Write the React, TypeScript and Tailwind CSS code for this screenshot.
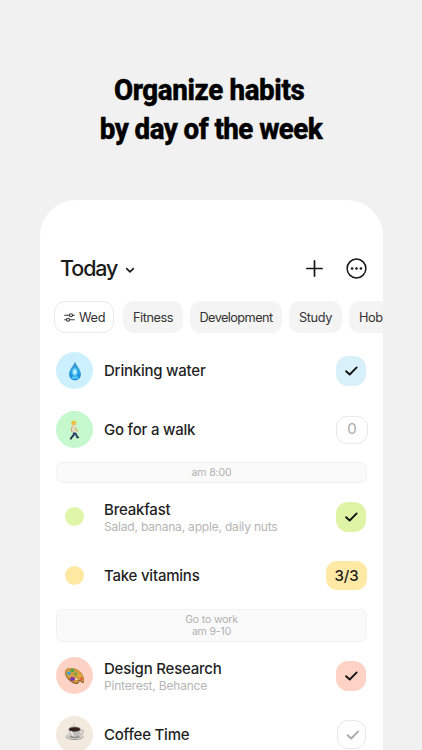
import type { ReactNode } from "react";
import clsx from "clsx";

type THabit = {
  title: string;
  note?: string;
  icon: ReactNode;
  action: ReactNode;
};

const Check = ({ className = "" }: { className?: string }) => (
  <svg
    width="14"
    height="12"
    viewBox="0 0 14 12"
    fill="none"
    stroke="currentColor"
    strokeWidth="1.9"
    strokeLinecap="round"
    strokeLinejoin="round"
    className={className}
  >
    <path d="M1.6 6.2 L5.2 9.5 L12.2 2.4" />
  </svg>
);

const Drop = () => (
  <svg width="14" height="20" viewBox="0 0 14 20">
    <defs>
      <linearGradient id="drop" x1="0" y1="0" x2="0" y2="1">
        <stop offset="0" stopColor="#3c8fc4" />
        <stop offset="0.5" stopColor="#2ba3e4" />
        <stop offset="1" stopColor="#1583d6" />
      </linearGradient>
      <radialGradient id="dropGlow">
        <stop offset="0" stopColor="#e2fbff" />
        <stop offset="0.5" stopColor="#86ddfb" />
        <stop offset="1" stopColor="#2ba3e4" stopOpacity="0" />
      </radialGradient>
    </defs>
    <path
      d="M7 .6C6.3 3.9 1.1 8.6 1.1 13.2C1.1 16.8 3.7 19.2 7 19.2S12.9 16.8 12.9 13.2C12.9 8.6 7.7 3.9 7 .6Z"
      fill="url(#drop)"
    />
    <ellipse cx="6.8" cy="11" rx="3.7" ry="5.6" fill="url(#dropGlow)" />
    <ellipse cx="7" cy="16.6" rx="3.5" ry="1.5" fill="#4fc5f5" />
  </svg>
);

const Walker = () => (
  <svg width="11" height="20" viewBox="0 0 11 20" fill="none">
    <path
      d="M5.2 12 L4.6 15.2 L2 18.2"
      stroke="#2c3560"
      strokeWidth="2"
      strokeLinejoin="round"
    />
    <path
      d="M5.5 12 L7.2 14.8 L8.6 17.8"
      stroke="#36406f"
      strokeWidth="2"
      strokeLinejoin="round"
    />
    <path d="M.9 18.6 L2.9 18.9 M8.2 18 L10 17" stroke="#222" strokeWidth="1.2" />
    <path d="M3.1 6 Q5.4 5 6.6 6.6 L7 12.4 H3.3Z" fill="#e6ddc8" />
    <path d="M3.2 6.5 L2.3 10.2 L3.4 12.2" stroke="#c9a468" strokeWidth="1.1" />
    <path d="M6.4 7.4 L7.1 10.2 L9.2 11.2" stroke="#d5a95c" strokeWidth="1.1" />
    <circle cx="4.9" cy="3.5" r="2.2" fill="#f0bf78" />
    <path d="M2.4 3.9 Q1.9 .6 5 .8 Q7.6 .8 7.3 2.8 L5 2.9 L4 5Z" fill="#efbd2e" />
  </svg>
);

const Palette = () => (
  <svg width="21" height="18" viewBox="0 0 21 18">
    <path
      d="M1 4.3C1.6 1 6.4 .1 11.2 1.8C16.6 3.7 20.2 8.5 20 13.5C19.9 16.1 18.7 16.8 17.4 15.3C16.1 13.8 14.8 14.1 14.8 15.3C14.8 17 13 17.5 10 16.4C4.6 14.4 .2 8.5 1 4.3Z"
      fill="#8f5c22"
    />
    <path
      d="M1.4 3.8C2.1 .9 6.8 .2 11.3 1.8C16.5 3.7 19.7 8.1 19.7 12.3C19.7 14.7 18.7 15.4 17.5 14C15.8 12.1 13.8 12.9 14 14.5C14.1 16 12.4 16.1 10 15.2C5 13.2 .5 7.9 1.4 3.8Z"
      fill="#d49a43"
    />
    <ellipse cx="8.3" cy="3.5" rx="2" ry="1.4" fill="#35ad4d" />
    <ellipse cx="4.8" cy="6.2" rx="2" ry="1.7" fill="#3aa3cf" />
    <ellipse cx="11.5" cy="7" rx="1.6" ry="1.2" fill="#5ba846" />
    <ellipse cx="8.5" cy="11.9" rx="2.4" ry="1.9" fill="#7a2fb5" />
    <ellipse cx="15.6" cy="8.5" rx="1.6" ry="1.2" fill="#e3b22c" />
    <ellipse cx="17.4" cy="11.7" rx="1.2" ry="1.5" fill="#e4573d" />
    <ellipse cx="12.4" cy="12.1" rx="1.3" ry=".9" fill="#f6dfcc" />
  </svg>
);

const Coffee = () => (
  <svg width="20" height="19" viewBox="0 0 20 19" fill="none" className="-mt-1.5">
    <path d="M8 4.6 Q6.3 3.4 7.6 2.5 M9.4 4.2 Q10.6 2.6 9.1 1" stroke="#cfcac2" />
    <ellipse cx="9.6" cy="14.6" rx="9.1" ry="3.5" fill="#989693" />
    <ellipse cx="9.6" cy="13.9" rx="9" ry="3.2" fill="#d1cfcc" />
    <ellipse cx="9.6" cy="14.6" rx="5" ry="1.6" fill="#8d8a87" />
    <path d="M15 8.6 Q19 7.4 18.2 10 Q17.4 12.2 14 12" stroke="#b7b5b2" strokeWidth="1.2" />
    <path d="M3.6 7.2 Q3.8 15 9.6 15 T15.6 7.2Z" fill="#bfbdbb" />
    <path d="M5 8.6 Q5.8 14 9.6 14.2 Q7.4 12 7.2 9Z" fill="#efedeb" />
    <ellipse cx="9.6" cy="7.2" rx="6.2" ry="2.6" fill="#aaa6a3" />
    <ellipse cx="9.6" cy="7.3" rx="5.4" ry="2.1" fill="#32211c" />
  </svg>
);

const Bubble = ({ className, children }: { className: string; children: ReactNode }) => (
  <div className={clsx("flex size-[37px] items-center justify-center rounded-full", className)}>
    {children}
  </div>
);

const Done = ({ className }: { className: string }) => (
  <div
    className={clsx(
      "mr-px flex size-[30px] items-center justify-center rounded-[12px] text-[#151515]",
      className,
    )}
  >
    <Check className="translate-x-[0.5px]" />
  </div>
);

const Section = ({ className, children }: { className: string; children: ReactNode }) => (
  <div
    className={clsx(
      "mx-4 flex flex-col items-center justify-center rounded-[7px] border border-[#f1f1f1] bg-[#fafafa] text-[10.5px] leading-3 tracking-[-0.15px] text-[#b0b0b0]",
      className,
    )}
  >
    {children}
  </div>
);

const Row = ({ title, note, icon, action }: THabit) => (
  <div className="flex h-[59px] items-center px-4">
    <div className="flex w-[37px] justify-center">{icon}</div>
    <div className={clsx("ml-[11px] flex-1 whitespace-nowrap", Boolean(note) && "pt-[3px]")}>
      <div className="text-[15px] leading-[18px] font-medium tracking-[-0.22px] text-[#1f1f1f]">
        {title}
      </div>
      {Boolean(note) && (
        <div className="text-[12px] leading-4 tracking-[-0.19px] text-[#b5b5b5]">{note}</div>
      )}
    </div>
    {action}
  </div>
);

const morning: THabit[] = [
  {
    title: "Drinking water",
    icon: <Bubble className="bg-[#cdf0fe]"><Drop /></Bubble>,
    action: <Done className="bg-[#d8f0f9]" />,
  },
  {
    title: "Go for a walk",
    icon: <Bubble className="bg-[#c5f8cd]"><Walker /></Bubble>,
    action: (
      <div className="-mr-px flex h-7 w-8 items-center justify-center rounded-[11px] border border-[#e8e8e8] text-[15px] text-[#aaa]">
        0
      </div>
    ),
  },
];

const breakfast: THabit[] = [
  {
    title: "Breakfast",
    note: "Salad, banana, apple, daily nuts",
    icon: <div className="size-[19px] rounded-full bg-[#dff5a8]" />,
    action: <Done className="bg-[#dff4a5]" />,
  },
  {
    title: "Take vitamins",
    icon: <div className="size-[19px] rounded-full bg-[#ffe8a1]" />,
    action: (
      <div className="flex h-[29px] w-[41px] items-center justify-center rounded-[11px] bg-[#ffe9a4] pt-px text-[15px] font-medium tracking-[-0.1px] text-[#1f1f1f]">
        3/3
      </div>
    ),
  },
];

const work: THabit[] = [
  {
    title: "Design Research",
    note: "Pinterest, Behance",
    icon: <Bubble className="bg-[#fed2c5]"><Palette /></Bubble>,
    action: <Done className="bg-[#fed2c5]" />,
  },
  {
    title: "Coffee Time",
    icon: <Bubble className="bg-[#f2eadf]"><Coffee /></Bubble>,
    action: (
      <div className="mr-px flex size-[29px] items-center justify-center rounded-[11px] border border-[#e8e8e8] text-[#aaa]">
        <Check className="translate-x-px" />
      </div>
    ),
  },
];

const chip = "flex h-8 shrink-0 items-center pt-px text-[12.75px] text-[#333] rounded-[11px]";

export default function App() {
  return (
    <div className="flex h-[750px] w-[422px] flex-col overflow-hidden bg-[#f1f1f1] font-['Inter',sans-serif]">
      <h1 className="flex h-[200px] shrink-0 scale-x-[0.94] flex-col items-center pt-[71px] font-['Roboto',sans-serif] text-[29.5px] leading-[39px] font-extrabold whitespace-nowrap text-black [-webkit-text-stroke:0.4px_black]">
        <span className="-ml-1 tracking-[-0.4px]">Organize habits</span>
        <span className="tracking-[-0.6px]">by day of the week</span>
      </h1>

      <main className="ml-10 h-[620px] w-[343px] shrink-0 overflow-hidden rounded-t-[36px] bg-white">
        <header className="flex h-[101px] items-center pt-9 pr-4 pl-5">
          <span className="text-[21.5px] font-medium tracking-[-1.1px] text-[#1c1c1c]">Today</span>
          <svg width="10" height="7" viewBox="0 0 10 7" fill="none" stroke="#222" strokeWidth="1.8" strokeLinecap="round" strokeLinejoin="round" className="mt-1 ml-[8px]">
            <path d="M1.7 1.7 L5 4.9 L8.3 1.7" />
          </svg>
          <svg width="17" height="17" viewBox="0 0 17 17" stroke="#151515" strokeWidth="1.7" strokeLinecap="round" className="ml-auto">
            <path d="M8.5 .9 V16.1 M.9 8.5 H16.1" />
          </svg>
          <svg width="21" height="21" viewBox="0 0 21 21" fill="none" className="ml-[23px]">
            <circle cx="10.5" cy="10.5" r="9.4" stroke="#151515" strokeWidth="1.5" />
            <g fill="#151515">
              <circle cx="6.1" cy="10.5" r="1.3" />
              <circle cx="10.5" cy="10.5" r="1.3" />
              <circle cx="14.9" cy="10.5" r="1.3" />
            </g>
          </svg>
        </header>

        <nav className="flex h-10 gap-[7px] pl-3.5">
          <div className={clsx(chip, "mr-0.5 w-[60px] gap-1 border border-[#e9e9e9] bg-white pl-[9px]")}>
            <svg width="11" height="9" viewBox="0 0 11 9" fill="none" stroke="#333" strokeWidth="1.1" strokeLinecap="round">
              <path d="M.7 2.2 H5.4 M8.7 2.2 H10.3 M.7 6.8 H2.3 M5.6 6.8 H10.3" />
              <circle cx="7" cy="2.2" r="1.5" />
              <circle cx="4" cy="6.8" r="1.5" />
            </svg>
            <span className="tracking-[-0.3px]">Wed</span>
          </div>
          <div className={clsx(chip, "w-[60px] justify-center bg-[#f4f4f4] tracking-[-0.45px]")}>Fitness</div>
          <div className={clsx(chip, "w-[92px] justify-center bg-[#f4f4f4] tracking-[-0.6px]")}>Development</div>
          <div className={clsx(chip, "w-[53px] justify-center bg-[#f4f4f4] tracking-[-0.4px]")}>Study</div>
          <div className={clsx(chip, "w-[60px] bg-[#f4f4f4] pl-2.5 tracking-[-0.45px]")}>Hob</div>
        </nav>

        {morning.map((habit) => (
          <Row key={habit.title} {...habit} />
        ))}
        <Section className="mt-[3px] mb-1 h-[21px]">
          <span>am 8:00</span>
        </Section>
        {breakfast.map((habit) => (
          <Row key={habit.title} {...habit} />
        ))}
        <Section className="mt-1 mb-1 h-[33px]">
          <span>Go to work</span>
          <span>am 9-10</span>
        </Section>
        {work.map((habit) => (
          <Row key={habit.title} {...habit} />
        ))}
      </main>
    </div>
  );
}
